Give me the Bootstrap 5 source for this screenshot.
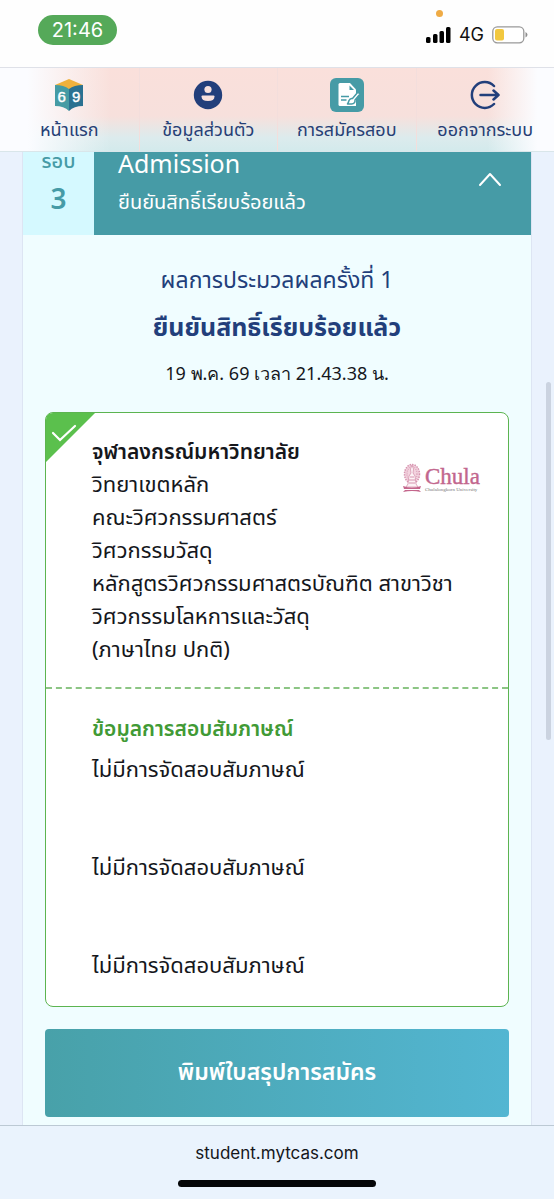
<!DOCTYPE html>
<html lang="th">
<head>
<meta charset="utf-8">
<meta name="viewport" content="width=device-width, initial-scale=1">
<title>student.mytcas.com</title>
<link href="https://cdn.jsdelivr.net/npm/bootstrap@5.3.0/dist/css/bootstrap.min.css" rel="stylesheet">
<style>
  body { font-family: "Noto Sans Thai", "Open Sans", "Noto Sans", sans-serif; background: #eaf2fd; color: #15171c; }
  .ui-font { font-family: Inter, sans-serif; }
  .status-bar { height: 67px; background: #fefefe; padding: 15px 26px 0 38px; }
  .clock { background: #55a959; color: #fff; font-size: 20px; line-height: 30px; width: 79px; }
  .signal { padding-top: 8px; }
  .network { font-size: 18px; line-height: 24px; color: #111; }
  .rec-dot { top: 10px; right: 111px; width: 7px; height: 7px; background: #efab45; }
  .site-nav { height: 85px; border-top: 1px solid #dfe1e8; border-bottom: 1px solid #d9e6ea;
    background: linear-gradient(90deg, #fbfcff 5%, rgba(251,252,255,0) 20%, rgba(251,252,255,0) 88%, #fbfcff 97%), linear-gradient(180deg, #fae0db 0%, #f7e0dc 58%, #dcebed 84%, #d3eaec 100%); }
  .site-nav a { color: #263f76; font-size: 18px; line-height: 26px; padding-top: 9px; }
  .site-nav a + a { border-left: 1px solid #f3dedc; }
  .site-nav svg { height: 36px; margin-bottom: 5px; }
  .round-card { margin: 0 22px; background: #f0fdff; border: 1px solid #dde5f3; border-width: 0 1px; }
  .round-head { background: #469ba6; color: #fff; height: 83px; border: 0; }
  .round-no { width: 71px; background: #d5f9ff; color: #469ba6; font-weight: 500; }
  .round-no .lbl { font-size: 20px; line-height: 20px; }
  .round-no .num { font-size: 28px; line-height: 58px; font-weight: 600; }
  .round-title { font-size: 25px; line-height: 26px; }
  .round-sub { font-size: 20px; line-height: 50px; }
  .navy { color: #223f7b; }
  .run { font-size: 23px; line-height: 40px; }
  .result { font-size: 25px; line-height: 54px; font-weight: 700; }
  .stamp { font-family: "Noto Sans", sans-serif; font-size: 18px; line-height: 36px; }
  .body-pad { padding: 26px 22px 8px; }
  .offer { margin-top: 21px; border: 1px solid #5cb450; border-radius: 8px; background: #fff; font-size: 22px; }
  .corner { top: 0; left: 0; }
  .offer-top { padding: 23px 26px 20px 46px; line-height: 33px; border-bottom: 2px dashed #8cc584; }
  .offer-top strong { font-size: 21px; font-weight: 600; }
  .offer-info { padding: 20px 46px 19px; line-height: 41px; }
  .offer-info h2 { font-size: 21px; line-height: 41px; font-weight: 600; color: #419a35; margin: 0; }
  .slot { margin-bottom: 57px; }
  .slot:last-child { margin-bottom: 0; }
  .logo { top: 50px; right: 26px; }
  .print { margin-top: 22px; height: 88px; border: 0; border-radius: 4px; color: #fff; font-size: 23px; font-weight: 600; background: linear-gradient(90deg, #48a1a9, #53b6d2); }
  .browser-bar { height: 74px; background: #eaf3fd; border-top: 1px solid #bcc9d4; padding-top: 15px; }
  .browser-bar a { color: #14161a; font-size: 17px; line-height: 24px; }
  .home-line { width: 198px; height: 7px; background: #050608; margin-top: 15px; }
  .thumb { top: 230px; right: 3px; width: 5px; height: 358px; background: #cbd3e0; }
</style>
</head>
<body>
<div class="d-flex flex-column min-vh-100">
  <div class="status-bar ui-font position-relative d-flex justify-content-between align-items-start">
    <div class="clock rounded-pill text-center">21:46</div>
    <span class="rec-dot rounded-circle position-absolute"></span>
    <div class="signal d-flex align-items-center gap-2">
      <svg width="25" height="18" viewBox="0 0 25 18"><rect x="0" y="11" width="4.500" height="6" rx="1.500"/><rect x="7" y="8" width="4.500" height="9" rx="1.500"/><rect x="13.500" y="5" width="4.500" height="12" rx="1.500"/><rect x="20" y="1" width="4.500" height="16" rx="1.500"/></svg>
      <span class="network">4G</span>
      <svg width="36" height="18" viewBox="0 0 36 18"><rect x=".8" y=".8" width="31" height="16" rx="4.500" fill="#fff" stroke="#999" stroke-width="1.300"/><rect x="3" y="3" width="9" height="11.500" rx="2" fill="#f2c83f"/><path d="M33.500 6v5.500q2-1 2-2.700t-2-2.800z" fill="#8e8e8e"/></svg>
    </div>
  </div>

  <nav class="site-nav d-flex text-center" aria-label="เมนูหลัก">
    <a href="#" class="text-decoration-none flex-fill w-25">
      <svg class="d-block mx-auto" width="30" viewBox="0 0 30 36"><path d="M1 8 15 2l14 6-14 6z" fill="#efb13c"/><path d="M1 8q9 0 14 4v22q-5-5-14-5z" fill="#459ba4"/><path d="M29 8q-9 0-14 4v22q5-5 14-5z" fill="#2a7191"/><text x="3.500" y="25" font-family="Liberation Sans Narrow, Liberation Sans" font-size="15" fill="#fff" stroke="#fff" stroke-width=".4">6</text><text x="18" y="25" font-family="Liberation Sans Narrow, Liberation Sans" font-size="15" fill="#fff" stroke="#fff" stroke-width=".4">9</text></svg>
      หน้าแรก
    </a>
    <a href="#" class="text-decoration-none flex-fill w-25">
      <svg class="d-block mx-auto" width="30" viewBox="0 0 30 36"><circle cx="15" cy="18" r="14.200" fill="#223f7b"/><circle cx="15" cy="12.500" r="3.600" fill="#f8e1dd"/><path d="M8.500 19.500q0-1 1-1h11q1 0 1 1 0 4.500-6.500 4.500t-6.500-4.500z" fill="#f8e1dd"/></svg>
      ข้อมูลส่วนตัว
    </a>
    <a href="#" class="text-decoration-none flex-fill w-25">
      <svg class="d-block mx-auto" width="36" viewBox="0 0 36 36"><rect x="1" y="1" width="34" height="34" rx="6" fill="#469ba6"/><path d="M11 6h10l6 6.500V29H11q-1.500 0-1.500-1.500v-20Q9.500 6 11 6z" fill="#fff"/><path d="M20.500 8.500V13H25z" fill="#469ba6"/><path d="M12 19.500h8m-8 3.500h5.500" stroke="#469ba6" stroke-width="1.500"/><path d="M18.500 27q1-1.500 1.500-3.500 1-2.500 3.500-2l5.500-6.500 2 2-5 6q.5 3.500-3.500 4z" fill="#fff" stroke="#469ba6" stroke-width="1.500" stroke-linejoin="round"/></svg>
      การสมัครสอบ
    </a>
    <a href="#" class="text-decoration-none flex-fill w-25">
      <svg class="d-block mx-auto" width="30" viewBox="0 0 30 36" fill="none" stroke="#223f7b" stroke-width="2.500" stroke-linecap="round" stroke-linejoin="round"><path d="M24 9A12.900 12.900 0 1 0 24 27M10.500 18H28.500m-5-4.500L28.500 18l-5 4.500"/></svg>
      ออกจากระบบ
    </a>
  </nav>

  <main class="position-relative flex-grow-1 d-flex flex-column">
    <span class="thumb rounded-pill position-absolute"></span>
    <section class="round-card flex-grow-1">
      <button type="button" class="round-head d-flex w-100 p-0 text-start" aria-expanded="true">
        <span class="round-no d-block h-100 text-center"><span class="lbl d-block">รอบ</span><span class="num d-block">3</span></span>
        <span class="flex-grow-1 ps-4"><span class="round-title d-block">Admission</span><span class="round-sub d-block">ยืนยันสิทธิ์เรียบร้อยแล้ว</span></span>
        <svg class="mt-3 me-4" width="34" height="24" viewBox="0 0 34 24" fill="none" stroke="#fff" stroke-width="2" stroke-linecap="round" stroke-linejoin="round"><path d="m7 17 10-11 10 11"/></svg>
      </button>
      <div class="body-pad">
        <div class="text-center">
          <div class="run navy">ผลการประมวลผลครั้งที่ 1</div>
          <h1 class="result navy m-0">ยืนยันสิทธิ์เรียบร้อยแล้ว</h1>
          <div class="stamp">19 พ.ค. 69 เวลา 21.43.38 น.</div>
        </div>
        <article class="offer position-relative">
          <svg class="corner position-absolute" width="50" height="50" viewBox="0 0 50 50"><path d="M0 49V7q0-7 7-7h42z" fill="#5bc04d"/><path d="m7 20 7 7 15-14" fill="none" stroke="#fff" stroke-width="2.200" stroke-linecap="round"/></svg>
          <svg class="logo position-absolute" width="80" height="32" viewBox="0 0 80 32">
            <ellipse cx="10" cy="11" rx="7.500" ry="9.500" fill="#f3d3df" stroke="#d694af" stroke-width="1.500" stroke-dasharray="1.500 1"/><ellipse cx="10" cy="11" rx="5" ry="7.500" fill="none" stroke="#deaabf" stroke-width="1.500" stroke-dasharray="1 1"/>
            <path d="M10 2l1.500 4-.5 4 2 3 1 8 2 3H4l2-3 1-8 2-3-.5-4z" fill="#fdf3f6" stroke="#d694af" stroke-width=".8"/><path d="M8 14h4m-5 3h6m-6 3h6" stroke="#d694af"/>
            <path d="M1 23q9 3 18 0l-1 3H2zM3 27h14l2 2q-9-2-18 0z" fill="#c4668c"/>
            <text x="23" y="21" font-family="Liberation Serif" font-size="23" fill="#c2668d" stroke="#c2668d" stroke-width=".4">Chula</text>
            <text x="23" y="28" font-family="Liberation Serif" font-size="5" fill="#777">Chulalongkorn University</text>
          </svg>
          <div class="offer-top">
            <strong class="d-block">จุฬาลงกรณ์มหาวิทยาลัย</strong>
            <div>วิทยาเขตหลัก</div>
            <div>คณะวิศวกรรมศาสตร์</div>
            <div>วิศวกรรมวัสดุ</div>
            <div>หลักสูตรวิศวกรรมศาสตรบัณฑิต สาขาวิชา<br>วิศวกรรมโลหการและวัสดุ</div>
            <div>(ภาษาไทย ปกติ)</div>
          </div>
          <div class="offer-info">
            <h2>ข้อมูลการสอบสัมภาษณ์</h2>
            <div class="slot">ไม่มีการจัดสอบสัมภาษณ์</div>
            <div class="slot">ไม่มีการจัดสอบสัมภาษณ์</div>
            <div class="slot">ไม่มีการจัดสอบสัมภาษณ์</div>
          </div>
        </article>
        <button type="button" class="print w-100 d-block">พิมพ์ใบสรุปการสมัคร</button>
      </div>
    </section>
  </main>

  <footer class="browser-bar ui-font text-center">
    <a href="#" class="text-decoration-none d-block">student.mytcas.com</a>
    <div class="home-line rounded-pill mx-auto"></div>
  </footer>
</div>
<script src="https://cdn.jsdelivr.net/npm/bootstrap@5.3.0/dist/js/bootstrap.bundle.min.js"></script>
</body>
</html>
